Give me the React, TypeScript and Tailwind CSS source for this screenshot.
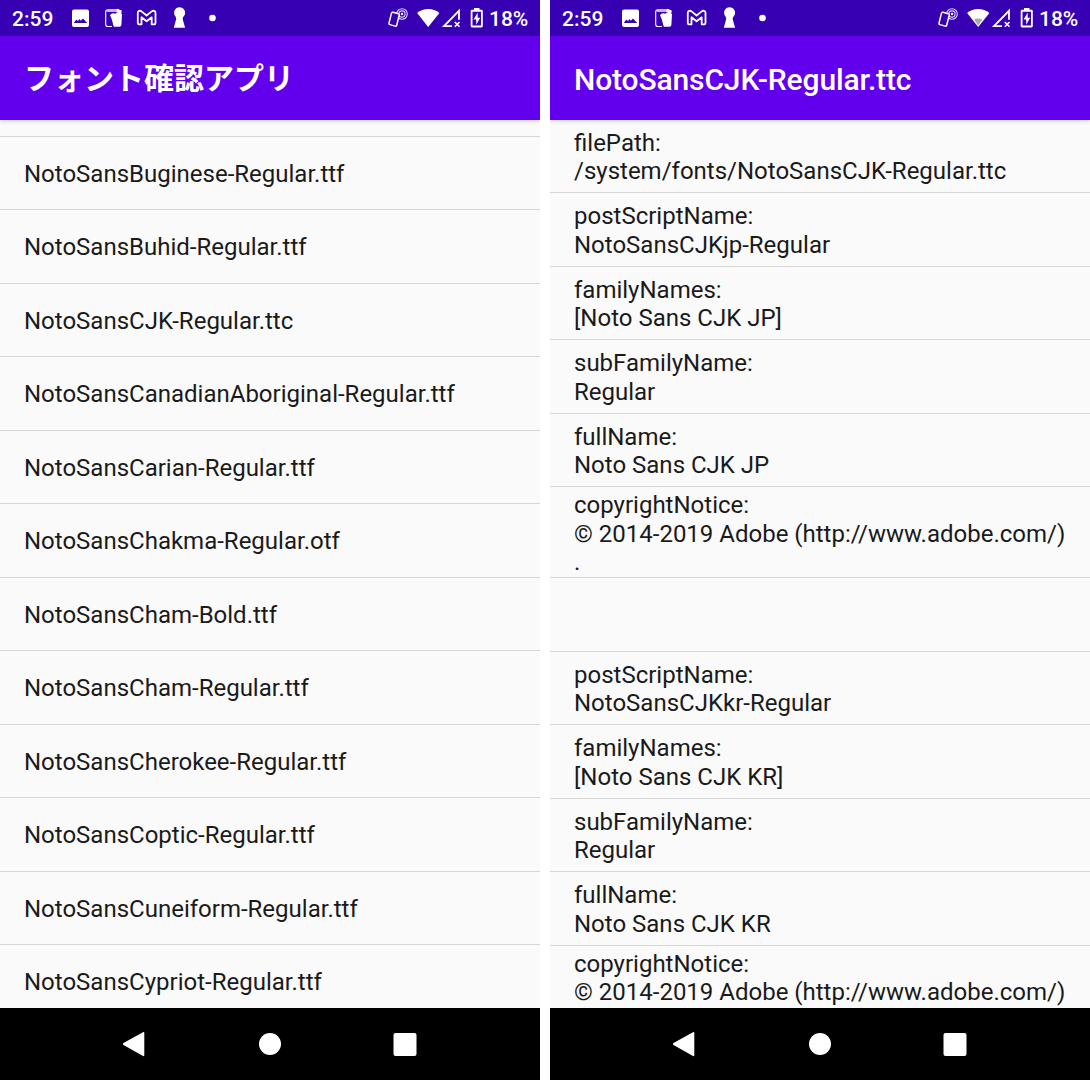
import type { ReactNode } from 'react';

const fontFiles = [
  'NotoSansBuginese-Regular.ttf',
  'NotoSansBuhid-Regular.ttf',
  'NotoSansCJK-Regular.ttc',
  'NotoSansCanadianAboriginal-Regular.ttf',
  'NotoSansCarian-Regular.ttf',
  'NotoSansChakma-Regular.otf',
  'NotoSansCham-Bold.ttf',
  'NotoSansCham-Regular.ttf',
  'NotoSansCherokee-Regular.ttf',
  'NotoSansCoptic-Regular.ttf',
  'NotoSansCuneiform-Regular.ttf',
  'NotoSansCypriot-Regular.ttf',
];

const details: { lines: string[]; tall?: boolean }[] = [
  { lines: ['filePath:', '/system/fonts/NotoSansCJK-Regular.ttc'] },
  { lines: ['postScriptName:', 'NotoSansCJKjp-Regular'] },
  { lines: ['familyNames:', '[Noto Sans CJK JP]'] },
  { lines: ['subFamilyName:', 'Regular'] },
  { lines: ['fullName:', 'Noto Sans CJK JP'] },
  { lines: ['copyrightNotice:', '© 2014-2019 Adobe (http://www.adobe.com/)', '.'], tall: true },
  { lines: [] },
  { lines: ['postScriptName:', 'NotoSansCJKkr-Regular'] },
  { lines: ['familyNames:', '[Noto Sans CJK KR]'] },
  { lines: ['subFamilyName:', 'Regular'] },
  { lines: ['fullName:', 'Noto Sans CJK KR'] },
  { lines: ['copyrightNotice:', '© 2014-2019 Adobe (http://www.adobe.com/)'], tall: true },
];

function NotificationIcons() {
  return (
    <svg className="ml-[17px] h-9 w-[150px]" viewBox="70 0 150 36" fill="none">
      <path fill="#fff" fillRule="evenodd" d="M74 9.500h13a2 2 0 0 1 2 2V25a2 2 0 0 1-2 2H74a2 2 0 0 1-2-2V11.500a2 2 0 0 1 2-2Zm-.2 13.500h13.400l-4.200-4.500-2.300 2.200-1.200-1.700-1.500 1.900-1.700-1.400Z" />
      <path stroke="#fff" strokeWidth="1.100" d="M112 26.500h-4a2.300 2.300 0 0 1-2.300-2.300V12a2.300 2.300 0 0 1 2.300-2.300h11" />
      <path stroke="#c4b3e8" strokeWidth="2" d="M107 11h13" />
      <path fill="#fff" d="m117 8.800 4.800 1.700-.5 2.800-5.100-1Zm-7 6.500c1-2.200 3.600-2.700 5.200-1.500 1.800-1.700 5-1.300 6.800.1l-.6 11a2 2 0 0 1-2 1.800h-5.500c-1.300-2.700-1-5.800-3.900-11.400Z" />
      <path stroke="#fff" strokeWidth="1.800" strokeLinejoin="round" d="M137.800 23V12.700c0-2 2.300-2.500 3.700-1.300l5.100 4.100 5.100-4.100c1.400-1.200 3.800-.7 3.800 1.300V23c0 .8-.6 1.300-1.300 1.300h-2.500v-7l-5.100 4-5.100-4v7h-2.400c-.8 0-1.300-.5-1.300-1.300Z" />
      <path fill="#fff" d="M174.100 12.700a5.500 5.500 0 1 1 9 4.200l-.5 2 2.500 8.900h-11.300l2.400-8.900-.4-2a5.500 5.500 0 0 1-1.700-4.200Z" />
      <circle cx="212.500" cy="18" r="3.300" fill="#fff" />
    </svg>
  );
}

function SystemIcons({ weakWifi }: { weakWifi: boolean }) {
  return (
    <svg className="ml-auto h-9 w-[98px]" viewBox="387 0 98 36" fill="none">
      <circle cx="402" cy="14" r="5.300" stroke="#d9cfff" strokeWidth="1.100" />
      <circle cx="402" cy="14" r="3.100" stroke="#d9cfff" strokeWidth="1.100" />
      <circle cx="402" cy="14" r="1.200" fill="#fff" />
      <path fill="#3700b3" stroke="#fff" strokeWidth="1.500" strokeLinejoin="round" d="m393 12.200 5.300 1.500c.8.200 1.100.7.900 1.500l-2.500 10c-.2.800-.7 1.100-1.500.9l-5.300-1.500c-.8-.2-1.100-.7-.9-1.500l2.500-10c.2-.8.7-1.100 1.500-.9Z" />
      <path fill="#fff" d="M417.100 13c6.100-5.300 16.200-5.300 22.300 0L428.200 27Z" />
      {weakWifi && <path fill="#a8a8a8" d="M424 19.500c2.500-1.200 5.900-1.200 8.400 0l-4.200 6Z" />}
      <path stroke="#fff" strokeWidth="1.800" d="M452 26.100h-8l15-15.300v9" />
      <path stroke="#fff" strokeWidth="1.600" d="m454.800 22 4.700 4.800m0-4.800-4.700 4.800" />
      <path fill="#fff" fillRule="evenodd" d="M474 8h5.500v1.700h1.900c.8 0 1.400.6 1.400 1.400v15c0 .8-.6 1.400-1.400 1.400h-9.300c-.8 0-1.400-.6-1.400-1.400v-15c0-.8.6-1.400 1.400-1.400h1.900Zm-1.500 3.700v13.800h8.500V11.700Z" />
      <path fill="#fff" d="m477.700 12.500-4.100 7h2.600v5.200l4-7h-2.500Z" />
    </svg>
  );
}

function NavigationBar() {
  return (
    <nav className="grid h-[72px] shrink-0 grid-cols-3 items-center bg-black px-[67px]">
      <svg className="mx-auto size-9" viewBox="0 0 36 36">
        <path d="M6.500 17 26 6.200c.7-.4 1.300 0 1.300.8v22.200c0 .8-.6 1.200-1.300.8L6.500 19c-.8-.5-.8-1.500 0-2Z" fill="#fff" />
      </svg>
      <div className="mx-auto size-[22px] rounded-full bg-white" />
      <div className="mx-auto size-[23px] -translate-x-[0.5px] rounded-[2px] bg-white" />
    </nav>
  );
}

function Phone({ title, weakWifi = false, children }: { title: ReactNode; weakWifi?: boolean; children: ReactNode }) {
  return (
    <section className="flex h-full w-[540px] flex-col overflow-hidden bg-[#fafafa]">
      <div className="flex h-9 shrink-0 items-center bg-[#3700b3] px-3 text-[21px] font-medium text-white">
        <span className="w-[41px] pt-[3px] whitespace-nowrap">2:59</span>
        <NotificationIcons />
        <SystemIcons weakWifi={weakWifi} />
        <span className="ml-[4px] w-[39px] pt-[3px] whitespace-nowrap">18%</span>
      </div>
      <header className="z-10 flex h-[84px] shrink-0 items-center bg-[#6200ee] px-6 text-white shadow-[0_1px_4px_rgba(0,0,0,0.2)]">
        {title}
      </header>
      <main className="min-h-0 flex-1 overflow-hidden text-[24px] text-[#1a1a1a]">{children}</main>
      <NavigationBar />
    </section>
  );
}

function Divider() {
  return <div className="mb-[0.5px] h-px bg-[#d6d6d6]" />;
}

export default function App() {
  return (
    <div className="flex h-[1080px] w-[1090px] gap-[10px] overflow-hidden bg-white font-['Roboto','Noto_Sans_CJK_JP',sans-serif]">
      <Phone title={<h1 className="text-[30px] font-bold">フォント確認アプリ</h1>}>
        <div className="h-[15.5px]" />
        <Divider />
        {fontFiles.map((name) => (
          <div key={name}>
            <div className="flex h-[72px] items-center px-6 pt-[1.5px]">{name}</div>
            <Divider />
          </div>
        ))}
      </Phone>
      <Phone weakWifi title={<h1 className="pt-[3px] text-[30px] font-medium tracking-[-0.13px]">NotoSansCJK-Regular.ttc</h1>}>
        {details.map(({ lines, tall }, i) => (
          <div key={i}>
            <div className={tall ? 'h-[89.5px] px-6 pt-[3.5px]' : 'h-[72px] px-6 pt-[8.5px]'}>
              {lines.map((line, j) => (
                <div key={j} className="h-[28.5px] leading-[28.5px] whitespace-nowrap">{line}</div>
              ))}
            </div>
            <Divider />
          </div>
        ))}
      </Phone>
    </div>
  );
}
